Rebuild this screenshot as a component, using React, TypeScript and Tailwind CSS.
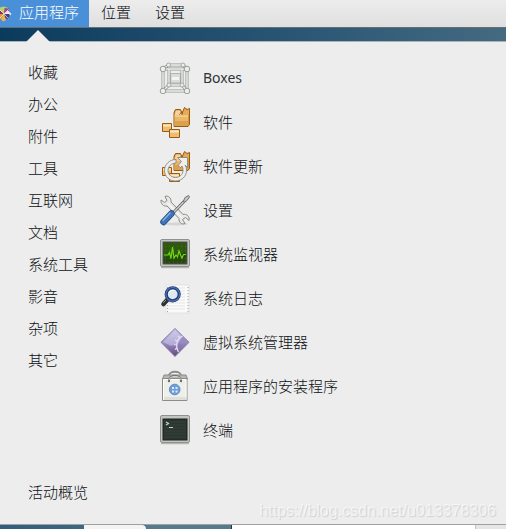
import { ReactNode, useState } from "react";

type AppItem = {
    name: string;
    icon: ReactNode;
    latin?: boolean;
};

function IconBoxes() {
    const front = [
        [4, 7],
        [28, 7],
        [4, 29],
        [28, 29]
    ];
    const back = [
        [9.5, 3],
        [24, 3],
        [10, 23],
        [23, 23]
    ];
    const frame =
        "M4 7H28V29H4ZM9.500 3H24M10 7V23H23V7M9.500 3L4 7M24 3L28 7M10 23L4 29M23 23L28 29";
    return (
        <svg viewBox="0 0 32 32" className="h-8 w-8" fill="none">
            <path d="M11.500 11.500H21.500V21H11.500Z" fill="#dadcd8" stroke="#b3b6b0" />
            <path d="M13 15H20V18H13Z" fill="#f4f4f2" />
            <path d={frame} stroke="#979a94" strokeWidth="3" />
            <path d={frame} stroke="#f0f1ef" strokeWidth="1.400" />
            {back.map(([x, y]) => (
                <circle key={`${x}-${y}`} cx={x} cy={y} r="2" fill="#eeefed" stroke="#979a94" strokeWidth="0.800" />
            ))}
            {front.map(([x, y]) => (
                <circle key={`${x}-${y}`} cx={x} cy={y} r="2.800" fill="#eeefed" stroke="#8f928c" strokeWidth="0.900" />
            ))}
        </svg>
    );
}

function Packages() {
    return (
        <>
            <path d="M15 20.500V6.500L16.500 3.500H21.500L23 7.500L25.500 1.500L28 3.500L30.500 2.500V18.500L29 20.500Z" fill="#d9963f" stroke="#9a5b0c" />
            <path d="M15.500 9L17 4.500H21L23 9Z" fill="#f4d3a0" />
            <path d="M23 9L26 2.500L27.500 4.500L30 3.500V8L29 9.500Z" fill="#e4ab5c" />
            <path d="M15.500 9.500H29V20H15.500Z" fill="#eab768" />
            <path d="M15.500 15H29V20H15.500Z" fill="#dea04a" />
            <path d="M15.500 10H29" stroke="#fae3bb" />
            <path d="M20.500 8.500L23 5.500V9" stroke="#9a5b0c" />
            <path d="M3.500 17.500H12.500V25.500H3.500Z" fill="#edbd74" stroke="#9a5b0c" />
            <path d="M4 19.500H12" stroke="#fbe6bf" strokeWidth="2" />
            <path d="M10.500 23.500H20.500V31.500H10.500Z" fill="#edbd74" stroke="#9a5b0c" />
            <path d="M11 25.500H20" stroke="#fbe6bf" strokeWidth="2" />
        </>
    );
}

function IconSoftware() {
    return (
        <svg viewBox="0 0 32 32" className="h-8 w-8" fill="none">
            <Packages />
        </svg>
    );
}

function IconUpdate() {
    return (
        <svg viewBox="0 0 32 32" className="h-8 w-8" fill="none">
            <Packages />
            <path
                d="M17 9.500C10.500 9.500 5.500 14.500 5.500 20.500C5.500 26.500 10.500 31 16.500 31C22.500 31 27.500 26.500 27.500 20.500C27.500 18.500 27 16.500 26 15L28.500 17.500V7.500H18.500L22.500 11.500L19 15.500L21.500 17.500L23 16C24 18 24 19 24 20.500C24 24.500 20.500 27.500 16.500 27.500C12.500 27.500 9 24.500 9 20.500C9 16.500 12.500 13 17 13Z"
                fill="#efefed"
                stroke="#858884"
                strokeWidth="0.900"
                strokeLinejoin="round"
            />
        </svg>
    );
}

function IconSettings() {
    return (
        <svg viewBox="0 0 32 32" className="h-8 w-8" fill="none">
            <ellipse cx="17" cy="30" rx="12" ry="1.500" fill="#d5d6d4" />
            <path
                d="M2 6L5.500 8.500L8 6.500L6 2.500C9 1 12.500 4 12 8L24 20.500C27.500 19.500 31 22.500 30 26.500L26.500 23.500L23.500 25.500L26 29.500C22.500 31 19.500 28 20 24.500L8 12C4.500 12.500 1.500 10 2 6Z"
                fill="#e9eae8"
                stroke="#888a85"
            />
            <path d="M9 9.500L23 24" stroke="#fff" />
            <path d="M14 19L25.500 7" stroke="#5f625e" strokeWidth="3" />
            <path d="M14 19L26 6.500" stroke="#d3d7cf" strokeWidth="1.200" />
            <path d="M24.500 7L26 3.500L29.500 1.500L30.500 3L28 6.500L25 8.500Z" fill="#c3c6c0" stroke="#70736f" />
            <path d="M4.500 28L12.500 19.500" stroke="#204a87" strokeWidth="6.400" strokeLinecap="round" />
            <path d="M4.500 28L12.500 19.500" stroke="#3f74b8" strokeWidth="4.800" strokeLinecap="round" />
            <path d="M4 26.500L11 19" stroke="#91b4de" strokeWidth="1.200" strokeLinecap="round" />
        </svg>
    );
}

function IconMonitor() {
    return (
        <svg viewBox="0 0 32 32" className="h-8 w-8" fill="none">
            <path d="M2 29.500H30" stroke="#b5b6b3" strokeWidth="1.500" />
            <rect x="1.500" y="1.500" width="29" height="27" rx="1.500" fill="#c6c7c5" stroke="#8f918d" />
            <rect x="4" y="4" width="24" height="22" fill="#26470e" stroke="#555753" />
            <path d="M5 5H27V15C19 15 12 17 5 20Z" fill="#2f590f" />
            <path d="M6 8.500H27M6 12.500H27M6 20.500H27M6 24H27" stroke="#417319" strokeDasharray="1 3" />
            <path d="M5 17H9L10.500 14.500L12 20.500L13.500 9L15 20L17 17L18.500 19L20 13L22 18L23 20L24.500 16.500H27" stroke="#6bd814" strokeWidth="1.200" />
        </svg>
    );
}

function IconLogs() {
    return (
        <svg viewBox="0 0 32 32" className="h-8 w-8" fill="none">
            <rect x="7" y="3" width="23" height="28" fill="#fafafa" stroke="#e2e2e0" />
            <path d="M9 6H26M9 9H26M9 12H26M9 15H26M9 18H26M9 21H26M9 24H26M9 27H26" stroke="#e4e5e3" />
            <path d="M8.500 5V30M29 5V30" stroke="#a3a5a1" strokeDasharray="1 2" />
            <path d="M4.500 22L9 17" stroke="#2e3436" strokeWidth="4.500" strokeLinecap="round" />
            <path d="M4 21L7 18" stroke="#888a85" />
            <circle cx="13.700" cy="12.300" r="6.500" fill="#dfe9f4" stroke="#1c3a73" strokeWidth="3.200" />
            <circle cx="13.700" cy="12.300" r="6.800" stroke="#5074b6" strokeWidth="1.200" />
            <path d="M9.500 11C10.500 7.500 15 6.500 17.500 9.500C14 8.500 12 9 9.500 11Z" fill="#fff" />
        </svg>
    );
}

function IconVirt() {
    return (
        <svg viewBox="0 0 32 32" className="h-8 w-8" fill="none">
            <defs>
                <linearGradient id="virt" x1="0" y1="0" x2="0" y2="1">
                    <stop offset="0" stopColor="#c7c5e8" />
                    <stop offset="0.500" stopColor="#9a8fc4" />
                    <stop offset="1" stopColor="#65467f" />
                </linearGradient>
            </defs>
            <path d="M16 2.500L30 16.300L16 30.500L2 16.300Z" fill="url(#virt)" stroke="#8a7ba8" strokeLinejoin="round" />
            <path d="M16 4L28 16L24 19L20 17L12 20L4 16Z" fill="#d9d7f2" opacity="0.450" />
            <path d="M23.500 10C17.500 13 16 20 19.500 26" stroke="#e7e0f1" strokeWidth="1.200" />
            <path d="M21 12L19 10M18.500 15L16 14M17.500 18.500L15 19M18 22L16 23.500" stroke="#e7e0f1" strokeWidth="1.200" />
            <path d="M23.500 11L28 16L20 25C18 20 19.500 15 23.500 11Z" fill="#8b7ab3" opacity="0.700" />
        </svg>
    );
}

function IconInstaller() {
    return (
        <svg viewBox="0 0 32 32" className="h-8 w-8" fill="none">
            <path d="M9.500 7C9.500 0 22.500 0 22.500 7" stroke="#8a8d88" strokeWidth="1.800" />
            <path d="M5 5H27L28.500 9H3.500Z" fill="#b6b9b3" stroke="#8a8d88" />
            <path d="M3.500 8.500H28V30.500H3.500Z" fill="#eeeeea" stroke="#8a8d88" />
            <path d="M4.500 9.500H27V29.500H4.500Z" stroke="#fff" />
            <path d="M5 27H27V30H5Z" fill="#dfe0dc" />
            <path d="M10 11C10 4 22 4 22 11" stroke="#70736e" strokeWidth="1.800" />
            <path d="M10 10.500C10 5 22 5 22 10.500" stroke="#d9dad6" />
            <circle cx="10" cy="11" r="1.200" fill="#6b6e69" />
            <circle cx="22" cy="11" r="1.200" fill="#6b6e69" />
            <circle cx="15.700" cy="19.500" r="5.300" fill="#6f9fd8" stroke="#5c8bc6" />
            <path d="M13 17H15V19H13ZM16.500 17H18.500V19H16.500ZM13 20.500H15V22.500H13ZM16.500 20.500H18.500V22.500H16.500Z" fill="#dfe9f5" />
        </svg>
    );
}

function IconTerminal() {
    return (
        <svg viewBox="0 0 32 32" className="h-8 w-8" fill="none">
            <path d="M2 29.500H30" stroke="#b5b6b3" strokeWidth="1.500" />
            <rect x="1.500" y="1.500" width="29" height="27" rx="1.500" fill="#c3c4c2" stroke="#8f918d" />
            <rect x="4" y="5" width="24" height="21" fill="#2b3531" stroke="#1c2220" />
            <path d="M5 8H27M5 11H27M5 14H27M5 17H27M5 20H27M5 23H27" stroke="#37423d" />
            <path d="M7 8L9.500 9.500L7 11M10 13.500H14" stroke="#c9cfc9" strokeWidth="1.200" />
        </svg>
    );
}

// pinwheel logo, its left part runs off the edge of the bar
function Logo() {
    return (
        <svg viewBox="0 0 16 16" className="-ml-1 h-4 w-4 shrink-0">
            <path d="M8 8L4 5V1.500L8 0.500L12 2V5Z" fill="#b9d36a" />
            <path d="M8 8L8.500 2L13 2.500V7Z" fill="#9a4a8d" />
            <path d="M8 8L12 4.500L15.500 8L12 11.500Z" fill="#f3e9ee" />
            <path d="M8 8H13L14 9L12 13L9 12Z" fill="#4b3d86" />
            <path d="M8 8L10 14L7 15.500L5 13Z" fill="#f0b548" />
            <path d="M8 8L5 13L2 13V8Z" fill="#e9962f" />
            <path d="M8 8H1L3 3.500Z" fill="#932279" />
            <path d="M3.500 3.500L12.500 12.500M12.500 3.500L3.500 12.500" stroke="#f6f0e8" strokeWidth="0.700" />
        </svg>
    );
}

const menus = ["位置", "设置"];

const categories = [
    "收藏",
    "办公",
    "附件",
    "工具",
    "互联网",
    "文档",
    "系统工具",
    "影音",
    "杂项",
    "其它"
];

const apps: AppItem[] = [
    { name: "Boxes", icon: <IconBoxes />, latin: true },
    { name: "软件", icon: <IconSoftware /> },
    { name: "软件更新", icon: <IconUpdate /> },
    { name: "设置", icon: <IconSettings /> },
    { name: "系统监视器", icon: <IconMonitor /> },
    { name: "系统日志", icon: <IconLogs /> },
    { name: "虚拟系统管理器", icon: <IconVirt /> },
    { name: "应用程序的安装程序", icon: <IconInstaller /> },
    { name: "终端", icon: <IconTerminal /> }
];

function TopBar() {
    return (
        <header className="flex h-7 border-b border-[#656e73] bg-linear-to-b from-[#ededed] to-[#dfdfdf]">
            <button className="flex items-center gap-[7px] bg-[#4a90d9] pr-2.5 text-white">
                <Logo />
                <span className="pb-1">应用程序</span>
            </button>
            {menus.map((menu) => (
                <button key={menu} className="px-3 pb-1">
                    {menu}
                </button>
            ))}
        </header>
    );
}

function App() {
    const [category, setCategory] = useState(categories[0]);

    return (
        <div className="relative flex min-h-screen flex-col bg-linear-to-r from-[#0b3b5c] via-[#2b5775] via-60% to-[#446a80] font-['Noto_Sans_CJK_SC','Noto_Sans',sans-serif] text-[15px] leading-5 font-light text-[#0c1012]">
            <TopBar />
            <div className="flex h-[13px] items-end pl-[26px]">
                <svg viewBox="0 0 24 12" className="z-10 -mb-px h-3 w-6">
                    <path d="M0 12L12 0L24 12Z" fill="#ededed" />
                </svg>
            </div>
            <main className="flex grow border-y border-t-[#a9b3b8] border-b-[#a0a0a0] bg-[#ededed]">
                <nav className="flex w-[159px] shrink-0 flex-col pt-3.5 pb-4">
                    {categories.map((name) => (
                        <button
                            key={name}
                            aria-pressed={name === category}
                            className="h-8 pl-7 text-left"
                            onClick={() => setCategory(name)}
                        >
                            {name}
                        </button>
                    ))}
                    <button className="mt-auto h-8 pl-7 text-left">活动概览</button>
                </nav>
                <ul className="grow pt-3.5">
                    {apps.map(({ name, icon, latin }) => (
                        <li key={name}>
                            <button className="flex h-11 w-full items-center gap-3 text-left">
                                {icon}
                                <span
                                    className={
                                        latin
                                            ? "font-['Noto_Sans',sans-serif] text-[14px] font-normal text-[#2e3436]"
                                            : ""
                                    }
                                >
                                    {name}
                                </span>
                            </button>
                        </li>
                    ))}
                </ul>
            </main>
            <div className="flex h-1 bg-[#42687f]">
                <div className="w-1/6 bg-linear-to-r from-[#2f5d7c] to-[#3f6880]" />
                <div className="w-[62px] rounded-tr bg-[#f4f4f4]" />
                <div className="w-[86px] border-r border-[#24343d] bg-[#547a8c]" />
                <div className="grow bg-white" />
                <div className="w-[31px] border-l border-[#c4c4c4] bg-[#e6e6e6]" />
            </div>
            <p className="absolute right-2.5 bottom-2 font-['Liberation_Sans',Arial,sans-serif] text-[16px] font-normal text-white/60 [text-shadow:1px_1px_1px_rgba(0,0,0,0.12)]">
                https://blog.csdn.net/u013378306
            </p>
        </div>
    );
}

export default App;
